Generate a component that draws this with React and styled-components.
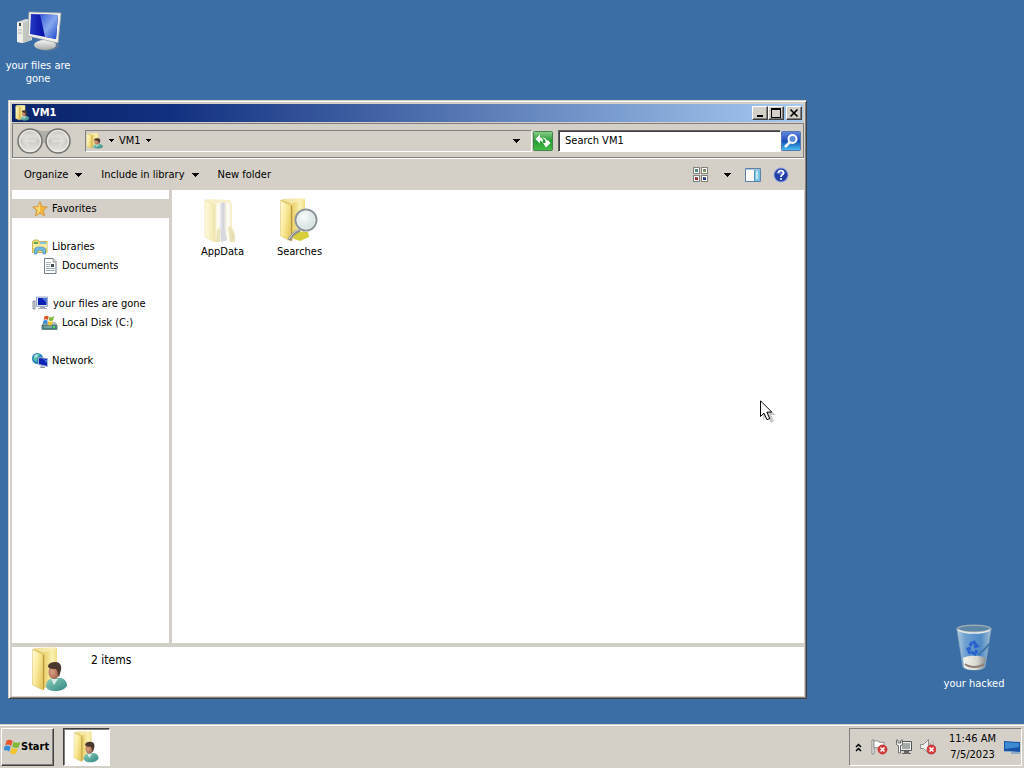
import React from "react";
import styled, { createGlobalStyle, css } from "styled-components";

const face = "#d4d0c8";
const desk = "#3a6ea5";

const GlobalStyle = createGlobalStyle`
  * { box-sizing: border-box; }
  body {
    margin: 0;
    background: ${desk};
    color: #000;
    font: 11px/14px "DejaVu Sans Condensed", "DejaVu Sans", Tahoma, sans-serif;
  }
  button, input { font: inherit; color: inherit; }
  button { padding: 0; border: 0; background: none; }
  ul { margin: 0; padding: 0; list-style: none; }
  svg { display: block; flex: none; }
`;

const raised = css`
  border: 1px solid;
  border-color: #fff #404040 #404040 #fff;
  box-shadow: inset -1px -1px 0 #808080;
`;

const Screen = styled.div`
  display: flex;
  flex-direction: column;
  min-height: 100vh;
  overflow: hidden;
`;

const Desktop = styled.main`
  position: relative;
  flex: 1;
`;

const Shortcut = styled.button`
  position: absolute;
  left: ${(p) => p.$left};
  right: ${(p) => p.$right};
  top: ${(p) => p.$top};
  bottom: ${(p) => p.$bottom};
  display: flex;
  flex-direction: column;
  align-items: center;
  gap: 5px;
  width: 76px;
  color: #fff;
  line-height: 13px;
`;

const Window = styled.section`
  position: absolute;
  left: 8px;
  right: 217px;
  top: 100px;
  bottom: 25px;
  display: flex;
  flex-direction: column;
  padding: 2px;
  background: ${face};
  border: 1px solid;
  border-color: ${face} #404040 #404040 ${face};
  box-shadow: inset 1px 1px 0 #fff, inset -1px -1px 0 #808080;
`;

const TitleBar = styled.header`
  display: flex;
  align-items: center;
  height: 20px;
  padding: 0 1px 0 3px;
  gap: 2px;
  border: 1px solid ${face};
  background: linear-gradient(90deg, #0a246a 0%, #123080 20%, #a6caf0 100%);
  color: #fff;
`;

const Title = styled.h1`
  flex: 1;
  margin: 0;
  font: inherit;
  font-weight: bold;
`;

const Caption = styled.div`
  display: flex;
`;

const CaptionButton = styled.button`
  ${raised}
  display: flex;
  align-items: center;
  justify-content: center;
  width: 16px;
  height: 14px;
  margin-left: ${(p) => (p.$apart ? "2px" : "0")};
  background: ${face};
`;

const NavBar = styled.div`
  display: flex;
  align-items: center;
  height: 35px;
  padding: 0 2px 0 4px;
  margin: 0 0 0 1px;
  border: 1px solid #808080;
  box-shadow: 0 1px 0 #fff;
`;

const AddressBar = styled.div`
  display: flex;
  flex: 1;
  align-items: center;
  gap: 5px;
  height: 22px;
  margin-left: 14px;
  padding: 0 5px 0 0;
  border: 1px solid;
  border-color: #808080 #fff #fff #808080;
`;

const Crumb = styled.button`
  display: flex;
  align-items: center;
  gap: 5px;
`;

const Spacer = styled.span`
  flex: 1;
`;

const IconButton = styled.button`
  display: flex;
  align-items: center;
  justify-content: center;
  width: ${(p) => p.$width || "20px"};
  height: 22px;
`;

const RefreshSlot = styled.div`
  margin: 0 5px 0 1px;
`;

const SearchBox = styled.input`
  width: 223px;
  height: 22px;
  padding: 0 6px;
  border: 1px solid;
  border-color: #606060 #fff #fff #606060;
  box-shadow: inset 1px 1px 0 #404040;
  border-radius: 0;
  background: #fff;
  outline: 0;
  &::placeholder { color: #000; opacity: 1; }
`;

const Toolbar = styled.div`
  display: flex;
  align-items: center;
  height: 31px;
  margin-top: 1px;
  padding: 0 13px;
`;

const Command = styled.button`
  display: flex;
  align-items: center;
  gap: 7px;
  margin-right: 19px;
`;

const ViewTools = styled.div`
  display: flex;
  align-items: center;
  gap: 8px;
`;

const Panes = styled.div`
  display: flex;
  flex: 1;
  min-height: 0;
  margin: 0 0 0 1px;
`;

const Sidebar = styled.nav`
  display: flex;
  flex-direction: column;
  gap: 19px;
  width: 160px;
  padding-top: 9px;
  background: #fff;
  border-right: 3px solid ${face};
`;

const TreeLink = styled.a`
  display: flex;
  align-items: center;
  gap: 4px;
  height: 19px;
  padding-left: ${(p) => (p.$child ? "29px" : "20px")};
  background: ${(p) => (p.$active ? face : "transparent")};
  color: #000;
  text-decoration: none;
`;

const Files = styled.div`
  display: flex;
  flex: 1;
  align-items: flex-start;
  padding: 7px 12px;
  background: #fff;
`;

const FileItem = styled.button`
  display: flex;
  flex-direction: column;
  align-items: center;
  gap: 2px;
  width: 77px;
`;

const Details = styled.footer`
  display: flex;
  gap: 22px;
  height: 53px;
  margin: 0 0 0 1px;
  padding: 0 19px;
  border-top: 4px solid ${face};
  background: #fff;
  font-size: 12px;
`;

const Count = styled.p`
  margin: 6px 0 0;
`;

const Taskbar = styled.footer`
  display: flex;
  align-items: center;
  gap: 9px;
  height: 44px;
  padding: 2px 2px 1px 1px;
  border-top: 1px solid ${face};
  box-shadow: inset 0 1px 0 #fff;
  background: ${face};
`;

const StartButton = styled.button`
  ${raised}
  display: flex;
  align-items: center;
  gap: 1px;
  width: 53px;
  height: 38px;
  padding-left: 2px;
  font-weight: bold;
`;

const TaskButton = styled.button`
  display: flex;
  align-items: center;
  justify-content: center;
  width: 47px;
  height: 38px;
  border: 1px solid;
  border-color: #404040 #fff #fff #404040;
  box-shadow: inset 1px 1px 0 #808080;
  background: #fff;
`;

const Tray = styled.div`
  display: flex;
  align-items: center;
  gap: 8px;
  height: 38px;
  padding: 0 1px 0 3px;
  border: 1px solid;
  border-color: #808080 #fff #fff #808080;
`;

const Clock = styled.time`
  margin-left: 5px;
  line-height: 16px;
  text-align: center;
`;

const Pointer = styled.div`
  position: absolute;
  left: 760px;
  top: 400px;
  pointer-events: none;
`;

function Arrow() {
  return (
    <svg width="7" height="4" viewBox="0 0 7 4" shapeRendering="crispEdges">
      <path d="M0 0h7L3.500 4z" />
    </svg>
  );
}

function SmallArrow() {
  return (
    <svg width="5" height="3" viewBox="0 0 5 3" shapeRendering="crispEdges">
      <path d="M0 0h5L2.500 3z" />
    </svg>
  );
}

function FolderShape() {
  return (
    <>
      <defs>
        <linearGradient id="fBack" x1="0" x2="1">
          <stop offset="0" stopColor="#d9bb50" />
          <stop offset=".55" stopColor="#eed77a" />
          <stop offset=".8" stopColor="#fbf2b4" />
          <stop offset="1" stopColor="#f1de86" />
        </linearGradient>
        <linearGradient id="fFront" x1="0" x2="1" y2="0.6">
          <stop offset="0" stopColor="#fffbe0" />
          <stop offset="0.5" stopColor="#fbeb9c" />
          <stop offset="1" stopColor="#e8cc66" />
        </linearGradient>
      </defs>
      <path d="M2 2 5 1l20-.5 1 1V34L12 42z" fill="url(#fBack)" />
      <path d="M2 2 5 1l20-.5 1 1-13 4z" fill="#f9f0bb" opacity=".7" />
      <path d="M1.500 2.500 12 7.500V43L1.500 38z" fill="url(#fFront)" stroke="#dcc474" strokeWidth=".6" />
      <path d="M12 7.500l1.200.3V42.500L12 43z" fill="#b9963a" />
    </>
  );
}

function UserFolder({ width, height }) {
  return (
    <svg width={width} height={height} viewBox="0 0 38 45" preserveAspectRatio="none">
      <defs>
        <linearGradient id="shirt" x1="0" y1="0" x2="1" y2="1">
          <stop offset="0" stopColor="#8fd0bd" />
          <stop offset="1" stopColor="#2f8580" />
        </linearGradient>
        <radialGradient id="skin" cx=".35" cy=".5">
          <stop offset="0" stopColor="#dca487" />
          <stop offset="1" stopColor="#a96b52" />
        </radialGradient>
      </defs>
      <FolderShape />
      <path d="M15 40c0-5 2-8 7-9l8 0c4 1 6 4 6 8-3 4-7 5-12 5-4 0-7-1-9-4z" fill="url(#shirt)" />
      <path d="M20 32l3 6 4-6z" fill="#d8ebe4" />
      <ellipse cx="23" cy="25" rx="5.500" ry="7" fill="url(#skin)" />
      <path d="M17 20c0-4 4-5 8-5 4 0 6 4 5 8l-2 7c-1-1-1-6-3-8-3 0-6 0-8-2z" fill="#4b392f" />
    </svg>
  );
}

function AppDataIcon() {
  return (
    <svg width="38" height="46" viewBox="0 0 38 46">
      <defs>
        <linearGradient id="appPaper" x1="0" x2="1">
          <stop offset="0" stopColor="#f7f1cf" />
          <stop offset=".2" stopColor="#fffef8" />
          <stop offset=".45" stopColor="#cfcfda" />
          <stop offset=".62" stopColor="#f7f4e2" />
          <stop offset=".75" stopColor="#fffef6" />
          <stop offset="1" stopColor="#dcdadb" />
        </linearGradient>
        <linearGradient id="appFront" x1="0" x2="1">
          <stop offset="0" stopColor="#fffadf" />
          <stop offset="1" stopColor="#f1e6ab" />
        </linearGradient>
      </defs>
      <path d="M1 3 4 2l22 1 2 4v22l3 8v6l-20 2z" fill="#f7f0cb" />
      <path d="M11 7l12-2 3 2v23l3 7v7l-18 0z" fill="url(#appPaper)" />
      <path d="M13 33l3-3v15h-4zM24 31l2-2 5 9v7h-5z" fill="#eadfac" opacity=".8" />
      <path d="M17 32l3-2 3 13-6 2z" fill="#d7d7df" />
      <path d="M1 3l10 5v37L1 40z" fill="url(#appFront)" stroke="#e9deaa" strokeWidth=".6" />
    </svg>
  );
}

function SearchesIcon() {
  return (
    <svg width="42" height="46" viewBox="0 0 42 46">
      <defs>
        <radialGradient id="lens" cx=".4" cy=".35" r=".7">
          <stop offset="0" stopColor="#f9fbfa" />
          <stop offset="1" stopColor="#cddddd" />
        </radialGradient>
      </defs>
      <g transform="translate(0 1)"><FolderShape /></g>
      <path d="M15 35l6 0 8 0 1 5-9 4-6-2z" fill="#d7ce3c" />
      <path d="M10 43c2-4 6-8 11-10" fill="none" stroke="#8d8d8d" strokeWidth="3" />
      <path d="M10 42c2-4 6-8 11-10" fill="none" stroke="#e0e0d8" strokeWidth="1" />
      <circle cx="27" cy="23" r="10.500" fill="url(#lens)" stroke="#8f969b" strokeWidth="2" />
      <circle cx="27" cy="23" r="9" fill="none" stroke="#e9eeee" />
    </svg>
  );
}

function ComputerIcon() {
  return (
    <svg width="48" height="44" viewBox="0 0 48 44">
      <defs>
        <linearGradient id="pcScreen" x1="0" y1="0" x2="1" y2="0">
          <stop offset="0" stopColor="#2438c4" />
          <stop offset=".5" stopColor="#0610a6" />
          <stop offset="1" stopColor="#0a18b0" />
        </linearGradient>
        <linearGradient id="pcShine" x1="0" y1="0" x2="1" y2="1">
          <stop offset="0" stopColor="#3a5fd8" />
          <stop offset=".5" stopColor="#86a8ee" />
          <stop offset="1" stopColor="#1c44cb" />
        </linearGradient>
        <linearGradient id="pcBase" y2="1" x2="0">
          <stop stopColor="#f5f5f1" />
          <stop offset="1" stopColor="#a8aaa9" />
        </linearGradient>
      </defs>
      <path d="M3 12 12 9l6 1v20l-9 3-6-1z" fill="#d9dad5" />
      <path d="M3 12l6 1v20l-6-1z" fill="#eeeeea" />
      <path d="M9 13l8-3v20l-8 3z" fill="#c4c6c0" />
      <path d="M5 13h2v3H5z" fill="#39463c" />
      <path d="M4 20h4m-4 3h4" stroke="#b5b7b2" />
      <path d="M30 29h8v8h-8z" fill="#aeb2b4" />
      <ellipse cx="33" cy="36" rx="12" ry="5" fill="#6c7d8e" opacity=".7" />
      <ellipse cx="31" cy="35" rx="11" ry="5" fill="url(#pcBase)" />
      <path d="M15 2l32 1-3 30-30-7z" fill="#f2f1e9" stroke="#a2a9ae" strokeWidth=".8" />
      <path d="M17 4l27 1-2 24-26-5z" fill="url(#pcScreen)" />
      <path d="M26 4.300l18 .7-2 24-11-2z" fill="url(#pcShine)" />
    </svg>
  );
}

function BinIcon() {
  return (
    <svg width="40" height="48" viewBox="0 0 40 48">
      <defs>
        <linearGradient id="bin" x1="0" x2="1">
          <stop offset="0" stopColor="#b2cbdc" />
          <stop offset=".25" stopColor="#6da0d0" />
          <stop offset=".7" stopColor="#508bc7" />
          <stop offset="1" stopColor="#a4bfd2" />
        </linearGradient>
        <linearGradient id="binFoot" x1="0" x2="1">
          <stop offset="0" stopColor="#f4f4ee" />
          <stop offset=".6" stopColor="#d9d8d0" />
          <stop offset="1" stopColor="#868c90" />
        </linearGradient>
      </defs>
      <path d="M3 5h34l-6 38c-2 4-20 4-22 0z" fill="url(#bin)" stroke="#91adc2" strokeWidth=".7" />
      <path d="M9 34c5-3 17-3 23 0l-2 9c-2 4-18 4-20 0z" fill="url(#binFoot)" />
      <path d="M11 40c5 4 14 4 19 0" fill="none" stroke="#8e7f78" strokeWidth="2" />
      <path d="M3 5c3-5 31-5 34 0-3 4-31 4-34 0z" fill="#5c86a6" stroke="#9aa9b0" strokeWidth="1.500" />
      <path d="M4 6c7 4 25 4 32 0" fill="none" stroke="#e4e8e8" strokeWidth="1.500" />
      <path d="M19 17l4 5-3 1M23 26l-2 4-4-2M16 30l-2-5 3-1M16 22l2-4" fill="none" stroke="#1d55cf" strokeWidth="3" opacity=".8" />
      <path d="M35 20c-4 6-8 8-11 11" fill="none" stroke="#3f72a5" strokeWidth="2" />
    </svg>
  );
}

function NavCircles() {
  return (
    <>
      <defs>
        <linearGradient id="orb" x2="0" y2="1">
          <stop stopColor="#c4c2bd" />
          <stop offset=".3" stopColor="#dedcd7" />
          <stop offset=".5" stopColor="#cbc9c4" />
          <stop offset="1" stopColor="#ebe9e4" />
        </linearGradient>
      </defs>
      <path d="M14 1c6 0 8 2 14 2s8-2 14-2v14H14z" fill="#b1afaa" />
      <circle cx="13" cy="13" r="12" fill="url(#orb)" stroke="#74736f" strokeWidth="1.500" />
      <circle cx="41" cy="13" r="12" fill="url(#orb)" stroke="#74736f" strokeWidth="1.500" />
      <circle cx="13" cy="13" r="10.500" fill="none" stroke="#efeeea" />
      <circle cx="41" cy="13" r="10.500" fill="none" stroke="#efeeea" />
      <path d="M19 13H7m5-5-5 5 5 5M35 13h12m-5-5 5 5-5 5" fill="none" stroke="#dfddd8" strokeWidth="2.500" />
    </>
  );
}

const History = styled.div`
  display: grid;
  grid-template: 26px / 28px 26px;
  svg { grid-area: 1 / 1 / 2 / 3; }
`;

const HistoryButton = styled.button`
  grid-area: 1 / ${(p) => p.$col};
  border-radius: 50%;
  z-index: 1;
`;

function RefreshIcon() {
  return (
    <svg width="20" height="20" viewBox="0 0 20 20">
      <defs>
        <linearGradient id="green" x2="0" y2="1">
          <stop stopColor="#8fd08c" />
          <stop offset=".5" stopColor="#249a32" />
          <stop offset="1" stopColor="#45bd46" />
        </linearGradient>
      </defs>
      <rect x=".5" y=".5" width="19" height="19" rx="1" fill="url(#green)" stroke="#44834a" />
      <path d="M7 3.500 2.500 8 7 12.500V9.500Q9 9.500 9.500 12 11 7 7 6.500z" fill="#fff" />
      <path d="M13 16.500l4.500-4.500-3-3.500V10Q12 6 9.500 7q3.500 1 3 5H10z" fill="#fff" />
    </svg>
  );
}

function FindIcon() {
  return (
    <svg width="20" height="20" viewBox="0 0 20 20">
      <defs>
        <linearGradient id="find" x2="0" y2="1">
          <stop stopColor="#6189dd" />
          <stop offset=".48" stopColor="#244fbc" />
          <stop offset=".52" stopColor="#1555ba" />
          <stop offset="1" stopColor="#49c4ef" />
        </linearGradient>
      </defs>
      <rect x=".5" y=".5" width="19" height="19" rx="1" fill="url(#find)" stroke="#5677b4" />
      <path d="M8.500 11.500 4 16" stroke="#fff" strokeWidth="2.500" />
      <circle cx="11.500" cy="8" r="4" fill="#5a8de0" stroke="#fff" strokeWidth="2" />
    </svg>
  );
}

function ViewIcon() {
  return (
    <svg width="16" height="16" viewBox="0 0 16 16">
      {[[1, 1, "#4a9a86"], [9, 1, "#7ba05b"], [1, 9, "#ad2620"], [9, 9, "#243d93"]].map(([x, y, c]) => (
        <g key={c}>
          <rect x={x - .5} y={y - .5} width="6" height="6" fill="#fff" stroke="#83827f" />
          <path d={`M${x + 1} ${y + 1}h3v3h-3z`} fill={c} />
          <path d={`M${x + 2} ${y + 1}h2v1h-2z`} fill="#777" />
        </g>
      ))}
    </svg>
  );
}

function PreviewIcon() {
  return (
    <svg width="16" height="14" viewBox="0 0 16 14">
      <path d="M.5.5h15v13H.5z" fill="#fff" stroke="#5f84aa" />
      <path d="M1 1h14v1H1z" fill="#a9c6df" />
      <path d="M10 2h5v11h-5z" fill="#76c3e5" />
      <path d="M9.500 2v11" stroke="#5b94be" />
      <path d="M11 3h2v8h-2z" fill="#c6e8f4" />
    </svg>
  );
}

function HelpIcon() {
  return (
    <svg width="16" height="16" viewBox="0 0 16 16">
      <circle cx="8" cy="8" r="7.500" fill="#8fa3dc" />
      <circle cx="8" cy="8" r="6.500" fill="#233fa4" />
      <path d="M3 6q5-6 10 0-5 3-10 0" fill="#5475cb" />
      <path d="M5.500 6q0-2.500 2.500-2.500T10.500 6Q10.500 7 9 8 8 8.500 8 10" fill="none" stroke="#fff" strokeWidth="1.700" />
      <circle cx="8" cy="12" r="1" fill="#fff" />
    </svg>
  );
}

function StarIcon() {
  return (
    <svg width="16" height="16" viewBox="0 0 16 16">
      <path d="M8 .7 10 5.600l5.300.4-4 3.500 1.300 5.400L8 12l-4.600 2.900 1.300-5.400L.7 6 6 5.600z" fill="#f6b63c" stroke="#d18f3a" strokeWidth=".8" />
      <path d="M8 2.500v8l-3.500 3L6 9 2.500 6.500l4-.3z" fill="#ffdf7c" />
    </svg>
  );
}

function LibrariesIcon() {
  return (
    <svg width="16" height="16" viewBox="0 0 16 16">
      <path d="M.5 2.500 2 1h4l1 1.500h8v11H.5z" fill="#ecd66e" stroke="#c6b45f" />
      <path d="M2 3h4v2H2z" fill="#5aad57" />
      <path d="M8 3h6v2H8z" fill="#83c4df" />
      <path d="M1 5h14v4H1z" fill="#f8e99c" />
      <path d="M2.500 15V11q0-3 5.500-3t5.500 3v4H11v-3q-3-2-6 0v3z" fill="#70b9e3" stroke="#478fc1" strokeWidth=".7" />
    </svg>
  );
}

function DocumentIcon() {
  return (
    <svg width="17" height="16" viewBox="-2 0 17 16">
      <path d="M1.500.5H10l3 3v12H1.500z" fill="#fff" stroke="#727c84" />
      <path d="M10 .5V4h3" fill="#d5dde3" stroke="#727c84" strokeWidth=".7" />
      <path d="M3 4.500h5M3 6.500h4M3 8.500h4M3 10.500h9M3 12.500h9" stroke="#9fb0be" />
      <path d="M8 6h3v3H8z" fill="#3f5058" />
    </svg>
  );
}

function SmallComputer() {
  return (
    <svg width="17" height="16" viewBox="0 0 17 16">
      <path d="M1 5h2v8H1z" fill="#d8dadf" stroke="#777d8b" strokeWidth=".8" />
      <path d="M4.500 1h11v9.500h-11z" fill="#dce1ea" stroke="#8795ba" strokeWidth=".8" />
      <path d="M6 2h8.500v7H6z" fill="#0c20b3" />
      <path d="M10 2h4.500v5z" fill="#4671e1" />
      <path d="M8 11h5v1h2v1H6v-1h2z" fill="#a7aeb7" />
    </svg>
  );
}

function Flag() {
  return (
    <>
      <path d="M2 2Q5 0 8 2L7 7Q4 5 1 7z" fill="#e5562c" />
      <path d="M9 2.500q3 2 7-1l-1.500 6q-3 2-6.500 0z" fill="#80b83a" />
      <path d="M.7 8q3-2 6 0l-1 5q-3-2-6 0z" fill="#3a8cd5" />
      <path d="M7.700 8.500q3 2 6.500 0l-1.500 5.500q-3 2-6 0z" fill="#f5c52f" />
    </>
  );
}

function DiskIcon() {
  return (
    <svg width="17" height="16" viewBox="0 0 17 16">
      <path d="M1 9l2-2h11l2 2v5H1z" fill="#b4bfba" />
      <path d="M1 10h15v4.500H1z" fill="#487e80" stroke="#668480" />
      <path d="M3 12h8" stroke="#a6c6bd" />
      <path d="M12 11h2v2h-2z" fill="#50df5e" />
      <g transform="translate(2 0) scale(.7)"><Flag /></g>
    </svg>
  );
}

function NetworkIcon() {
  return (
    <svg width="16" height="16" viewBox="0 0 16 16">
      <circle cx="5.500" cy="5.500" r="5.500" fill="#2881c0" />
      <path d="M3 2q4-3 5 0L6 4 4 9 1 6z" fill="#5bc4a8" />
      <path d="M2 3l3-2 1 2-3 2z" fill="#b5e0dd" />
      <path d="M6.500 4.500l9 1v8l-9-2z" fill="#0d23b3" stroke="#a4b5d4" />
      <path d="M11 6l4 1v3z" fill="#4973df" />
      <path d="M9 13l4 1v1H8z" fill="#8995a4" />
    </svg>
  );
}

function StartLogo() {
  return (
    <svg width="16" height="16" viewBox="0 0 16 16">
      <g transform="rotate(7 8 8)"><Flag /></g>
    </svg>
  );
}

function Cross() {
  return (
    <>
      <circle cx="11.500" cy="10.500" r="4.500" fill="#d83b3b" stroke="#b72d2d" strokeWidth=".8" />
      <path d="M9.500 8.500l4 4m0-4-4 4" stroke="#fff" strokeWidth="1.600" />
    </>
  );
}

function FlagIcon() {
  return (
    <svg width="17" height="16" viewBox="0 0 17 16">
      <path d="M1 1h2v14H1z" fill="#fff" stroke="#777" strokeWidth=".8" />
      <path d="M3 2q3-1 5 1 2 1 5 0v7q-3 1-5-1Q6 8 3 9z" fill="#fff" stroke="#777" strokeWidth=".8" />
      <Cross />
    </svg>
  );
}

function TrayNetwork() {
  return (
    <svg width="16" height="16" viewBox="0 0 16 16">
      <path d="M4.500 2.500h11v9h-11z" fill="#eee" stroke="#555" />
      <path d="M6 4h8v6H6z" fill="#a5aaa8" />
      <path d="M8 12h5v2h2v1H6v-1h2z" fill="#666" />
      <path d="M.5 1v4q0 1.500 2 1.500v7.500h2V6.500q2 0 2-1.500V1h-1.500v3h-3V1z" fill="#fff" stroke="#555" strokeWidth=".8" />
    </svg>
  );
}

function SpeakerIcon() {
  return (
    <svg width="16" height="16" viewBox="0 0 16 16">
      <path d="M.5 5.500h3l5-5v14l-5-5h-3z" fill="#eee" stroke="#777" strokeWidth=".8" />
      <path d="M10 4q3 4 0 8M12 2q2 2 2 5" fill="none" stroke="#aaa" />
      <Cross />
    </svg>
  );
}

function ShowDesktop() {
  return (
    <svg width="16" height="15" viewBox="0 0 16 15">
      <path d="M0 1l16 1v10L0 11z" fill="#1652a5" />
      <path d="M1 2l14 1v4L1 9z" fill="#3d8ad3" />
      <path d="M0 11l16 1v2H7v-2L0 12z" fill="#8fabc5" />
    </svg>
  );
}

const groups = [
  [["Favorites", StarIcon, false, true]],
  [["Libraries", LibrariesIcon], ["Documents", DocumentIcon, true]],
  [["your files are gone", SmallComputer], ["Local Disk (C:)", DiskIcon, true]],
  [["Network", NetworkIcon]],
];

export default function App() {
  return (
    <Screen>
      <GlobalStyle />
      <Desktop>
        <Shortcut $left="0" $top="10px">
          <ComputerIcon />
          <span>your files are gone</span>
        </Shortcut>
        <Shortcut $right="12px" $bottom="34px">
          <BinIcon />
          <span>your hacked</span>
        </Shortcut>

        <Window aria-label="VM1">
          <TitleBar>
            <UserFolder width="15" height="16" />
            <Title>VM1</Title>
            <Caption>
              <CaptionButton aria-label="Minimize">
                <svg width="10" height="10" viewBox="0 0 10 10"><path d="M2 7h6v2H2z" /></svg>
              </CaptionButton>
              <CaptionButton aria-label="Maximize">
                <svg width="10" height="10" viewBox="0 0 10 10"><path d="M0 0h10v10H0zM1 2v7h8V2z" fillRule="evenodd" /></svg>
              </CaptionButton>
              <CaptionButton $apart aria-label="Close">
                <svg width="10" height="10" viewBox="0 0 10 10"><path d="M1.500 1.500l7 7m0-7-7 7" stroke="#000" strokeWidth="1.700" /></svg>
              </CaptionButton>
            </Caption>
          </TitleBar>

          <NavBar>
            <History>
              <svg width="54" height="26" viewBox="0 0 54 26"><NavCircles /></svg>
              <HistoryButton $col={1} aria-label="Back" />
              <HistoryButton $col={2} aria-label="Forward" />
            </History>
            <AddressBar>
              <UserFolder width="18" height="16" />
              <Crumb aria-label="Root"><SmallArrow /></Crumb>
              <Crumb>VM1 <SmallArrow /></Crumb>
              <Spacer />
              <IconButton aria-label="Previous locations"><Arrow /></IconButton>
            </AddressBar>
            <RefreshSlot>
              <IconButton aria-label="Refresh"><RefreshIcon /></IconButton>
            </RefreshSlot>
            <SearchBox aria-label="Search VM1" placeholder="Search VM1" />
            <IconButton aria-label="Search"><FindIcon /></IconButton>
          </NavBar>

          <Toolbar>
            <Command>Organize <Arrow /></Command>
            <Command>Include in library <Arrow /></Command>
            <Command>New folder</Command>
            <Spacer />
            <ViewTools>
              <IconButton aria-label="Change view"><ViewIcon /></IconButton>
              <IconButton $width="16px" aria-label="More views"><Arrow /></IconButton>
              <IconButton aria-label="Preview pane"><PreviewIcon /></IconButton>
              <IconButton aria-label="Help"><HelpIcon /></IconButton>
            </ViewTools>
          </Toolbar>

          <Panes>
            <Sidebar aria-label="Folders">
              {groups.map((items) => (
                <ul key={items[0][0]}>
                  {items.map(([label, Icon, child, active]) => (
                    <li key={label}>
                      <TreeLink href="#" $child={child} $active={active}>
                        <Icon />
                        {label}
                      </TreeLink>
                    </li>
                  ))}
                </ul>
              ))}
            </Sidebar>
            <Files>
              <FileItem><AppDataIcon />AppData</FileItem>
              <FileItem><SearchesIcon />Searches</FileItem>
            </Files>
          </Panes>

          <Details>
            <UserFolder width="38" height="45" />
            <Count>2 items</Count>
          </Details>
        </Window>

        <Pointer>
          <svg width="18" height="26" viewBox="0 0 18 26">
            <path d="M3 4v15l4-3 4 7 3-2-3-6h5z" fill="#000" opacity=".22" />
            <path d="M.5.8v15.700L4 13.200l3 6.500 2.700-1.200-2.900-6.400h5z" fill="#fff" stroke="#000" />
          </svg>
        </Pointer>
      </Desktop>

      <Taskbar>
        <StartButton><StartLogo />Start</StartButton>
        <TaskButton aria-label="VM1"><UserFolder width="27" height="32" /></TaskButton>
        <Spacer />
        <Tray>
          <IconButton $width="10px" aria-label="Show hidden icons">
            <svg width="7" height="9" viewBox="0 0 7 9"><path d="M1 4l2.500-2.500L6 4M1 8l2.500-2.500L6 8" fill="none" stroke="#000" strokeWidth="1.500" /></svg>
          </IconButton>
          <FlagIcon />
          <TrayNetwork />
          <SpeakerIcon />
          <Clock>11:46 AM<br />7/5/2023</Clock>
          <ShowDesktop />
        </Tray>
      </Taskbar>
    </Screen>
  );
}
